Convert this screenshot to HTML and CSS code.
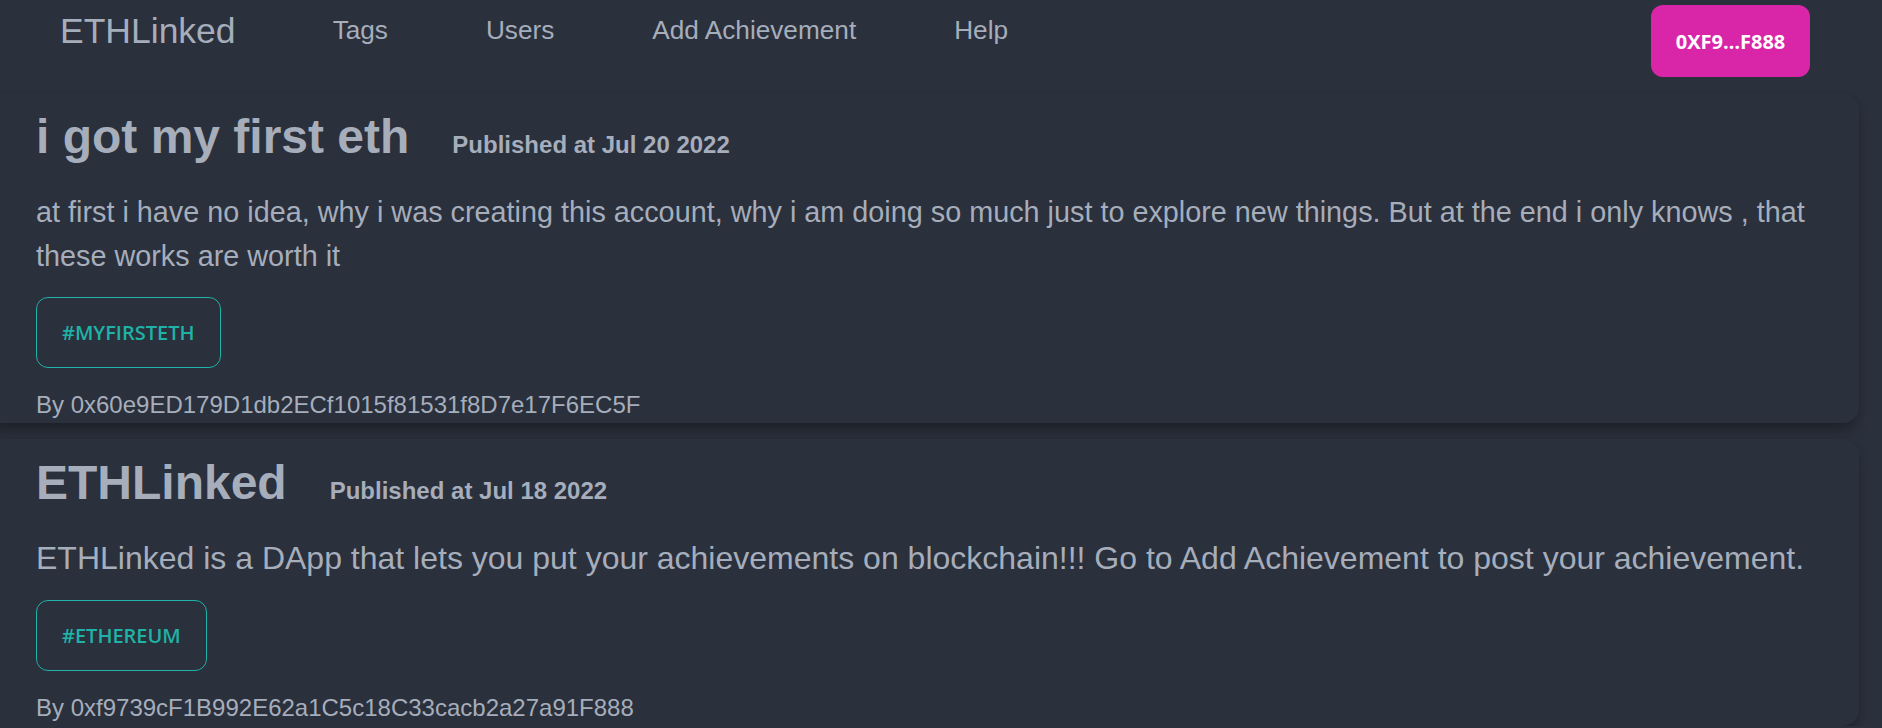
FILE: index.html
```html
<!DOCTYPE html>
<html lang="en">
<head>
<meta charset="utf-8">
<title>ETHLinked</title>
<link rel="stylesheet" href="styles.css">
</head>
<body>
<header class="navbar">
  <a class="brand" href="#">ETHLinked</a>
  <nav class="nav-links">
    <a href="#">Tags</a>
    <a href="#">Users</a>
    <a href="#">Add Achievement</a>
    <a href="#">Help</a>
  </nav>
  <button class="wallet-btn">0XF9…F888</button>
</header>
<main class="feed">
  <article class="card">
    <div class="card-head">
      <h1 class="card-title">i got my first eth</h1>
      <span class="card-date">Published at Jul 20 2022</span>
    </div>
    <p class="card-text">at first i have no idea, why i was creating this account, why i am doing so much just to explore new things. But at the end i only knows , that these works are worth it</p>
    <div class="tags"><span class="tag">#MYFIRSTETH</span></div>
    <p class="card-author">By 0x60e9ED179D1db2ECf1015f81531f8D7e17F6EC5F</p>
  </article>
  <article class="card">
    <div class="card-head">
      <h1 class="card-title">ETHLinked</h1>
      <span class="card-date">Published at Jul 18 2022</span>
    </div>
    <p class="card-text card-text-lg">ETHLinked is a DApp that lets you put your achievements on blockchain!!! Go to Add Achievement to post your achievement.</p>
    <div class="tags"><span class="tag">#ETHEREUM</span></div>
    <p class="card-author">By 0xf9739cF1B992E62a1C5c18C33cacb2a27a91F888</p>
  </article>
</main>
</body>
</html>
```

FILE: styles.css
```css
* { box-sizing: border-box; }

html, body {
  margin: 0;
  padding: 0;
  background: #2a303c;
  color: #a6adbb;
  font-family: "Liberation Sans", Arial, sans-serif;
  overflow: hidden;
}

a { color: inherit; text-decoration: none; }

.navbar {
  display: flex;
  align-items: flex-start;
  height: 93px;
  padding: 5px 72px 0 60px;
}

.brand {
  font-size: 35.5px;
  line-height: 40px;
  margin-top: 6px;
}

.nav-links {
  display: flex;
  gap: 98px;
  margin-left: 97px;
  margin-top: 10px;
  font-size: 26.2px;
  line-height: 30px;
}

.wallet-btn {
  margin-left: auto;
  width: 159px;
  height: 72px;
  border: none;
  border-radius: 12px;
  background: #d926a9;
  color: #ffffff;
  font-family: "Open Sans", "Noto Sans", sans-serif;
  font-weight: 700;
  font-size: 20px;
  padding: 0;
}

.feed {
  display: flex;
  flex-direction: column;
  gap: 16px;
  margin-left: -16px;
  margin-right: 23px;
}

.card {
  background: #2a303c;
  border-radius: 16px;
  padding: 20px 36px 0 52px;
  box-shadow: 0 12px 18px -6px rgba(0, 0, 0, 0.28), 0 4px 8px -2px rgba(0, 0, 0, 0.18);
}

.card-head {
  display: flex;
  align-items: baseline;
  gap: 43px;
}

.card-title {
  margin: 0;
  font-size: 48px;
  line-height: 48px;
  font-weight: 700;
}

.card-date {
  font-size: 24px;
  font-weight: 700;
}

.card-text {
  margin: 30px 0 0;
  font-size: 28.8px;
  line-height: 43.5px;
}

.card-text-lg {
  font-size: 32px;
}

.tags {
  display: flex;
  gap: 12px;
  margin-top: 19px;
}

.tag {
  display: inline-flex;
  align-items: center;
  height: 71px;
  padding: 0 25px;
  border: 1px solid #1fb2a6;
  border-radius: 12px;
  color: #1fb2a6;
  font-family: "Open Sans", "Noto Sans", sans-serif;
  font-weight: 600;
  font-size: 20px;
}

.card-author {
  margin: 19px 0 0;
  font-size: 24px;
  line-height: 36px;
}
```
